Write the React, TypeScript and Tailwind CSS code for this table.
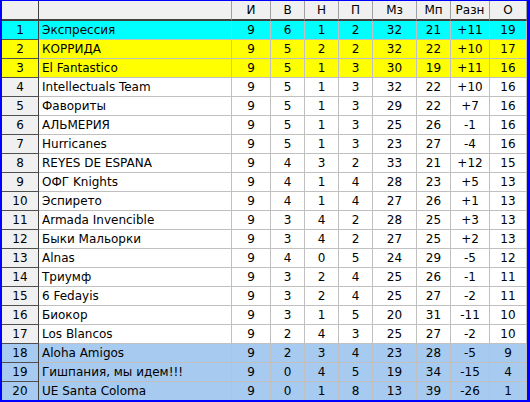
const columns = [
  { label: "И", w: "w-[39px]" },
  { label: "В", w: "w-[34px]" },
  { label: "Н", w: "w-[34px]" },
  { label: "П", w: "w-[34px]" },
  { label: "Мз", w: "w-[44px]" },
  { label: "Мп", w: "w-[34px]" },
  { label: "Разн", w: "w-[39px]" },
  { label: "О", w: "w-[37px]" },
];

type Row = { team: string; stats: string[]; tone?: "cyan" | "yellow" | "blue" };

const rows: Row[] = [
  { team: "Экспрессия", stats: ["9", "6", "1", "2", "32", "21", "+11", "19"], tone: "cyan" },
  { team: "КОРРИДА", stats: ["9", "5", "2", "2", "32", "22", "+10", "17"], tone: "yellow" },
  { team: "El Fantastico", stats: ["9", "5", "1", "3", "30", "19", "+11", "16"], tone: "yellow" },
  { team: "Intellectuals Team", stats: ["9", "5", "1", "3", "32", "22", "+10", "16"] },
  { team: "Фавориты", stats: ["9", "5", "1", "3", "29", "22", "+7", "16"] },
  { team: "АЛЬМЕРИЯ", stats: ["9", "5", "1", "3", "25", "26", "-1", "16"] },
  { team: "Hurricanes", stats: ["9", "5", "1", "3", "23", "27", "-4", "16"] },
  { team: "REYES DE ESPANA", stats: ["9", "4", "3", "2", "33", "21", "+12", "15"] },
  { team: "ОФГ Knights", stats: ["9", "4", "1", "4", "28", "23", "+5", "13"] },
  { team: "Эспирето", stats: ["9", "4", "1", "4", "27", "26", "+1", "13"] },
  { team: "Armada Invencible", stats: ["9", "3", "4", "2", "28", "25", "+3", "13"] },
  { team: "Быки Мальорки", stats: ["9", "3", "4", "2", "27", "25", "+2", "13"] },
  { team: "Alnas", stats: ["9", "4", "0", "5", "24", "29", "-5", "12"] },
  { team: "Триумф", stats: ["9", "3", "2", "4", "25", "26", "-1", "11"] },
  { team: "6 Fedayis", stats: ["9", "3", "2", "4", "25", "27", "-2", "11"] },
  { team: "Биокор", stats: ["9", "3", "1", "5", "20", "31", "-11", "10"] },
  { team: "Los Blancos", stats: ["9", "2", "4", "3", "25", "27", "-2", "10"] },
  { team: "Aloha Amigos", stats: ["9", "2", "3", "4", "23", "28", "-5", "9"], tone: "blue" },
  { team: "Гишпания, мы идем!!!", stats: ["9", "0", "4", "5", "19", "34", "-15", "4"], tone: "blue" },
  { team: "UE Santa Coloma", stats: ["9", "0", "1", "8", "13", "39", "-26", "1"], tone: "blue" },
];

const toneBg = {
  cyan: "bg-[#00ffff]",
  yellow: "bg-[#ffff00]",
  blue: "bg-[#a6caf0]",
};

export default function App() {
  return (
    <div className="w-[530px] h-[402px] bg-white border-[#0000ff] border-t border-l-2 border-r-[3px] border-b-2 font-['DejaVu_Sans',sans-serif] text-[12px] text-black leading-none overflow-hidden">
      <div className="flex h-[20px]">
        <div className="w-[37px] shrink-0 bg-[#f0f0f0] border-r border-b-2 border-[#404040]" />
        <div className="w-[193px] shrink-0 bg-[#f0f0f0] border-r border-r-[#a0a0a0] border-b-2 border-b-[#404040]" />
        {columns.map((c) => (
          <div
            key={c.label}
            className={`${c.w} shrink-0 bg-[#f0f0f0] border-r border-r-[#a0a0a0] border-b-2 border-b-[#404040] flex items-center justify-center`}
          >
            {c.label}
          </div>
        ))}
      </div>
      {rows.map((r, i) => {
        const bg = r.tone ? toneBg[r.tone] : "bg-white";
        const last = i === rows.length - 1;
        return (
          <div key={r.team} className={`flex ${last ? "h-[18px]" : "h-[19px]"}`}>
            <div
              className={`w-[37px] shrink-0 ${r.tone ? bg : "bg-[#f0f0f0]"} border-r border-r-[#404040] ${last ? "" : "border-b border-b-[#505050]"} flex items-center justify-center`}
            >
              {i + 1}
            </div>
            <div
              className={`w-[193px] shrink-0 ${bg} border-r border-r-[#c0c0c0] ${last ? "" : "border-b border-b-[#c0c0c0]"} flex items-center pl-[3px] whitespace-nowrap`}
            >
              {r.team}
            </div>
            {r.stats.map((s, j) => (
              <div
                key={j}
                className={`${columns[j].w} shrink-0 ${bg} border-r border-r-[#c0c0c0] ${last ? "" : "border-b border-b-[#c0c0c0]"} flex items-center justify-center`}
              >
                {s}
              </div>
            ))}
          </div>
        );
      })}
    </div>
  );
}
